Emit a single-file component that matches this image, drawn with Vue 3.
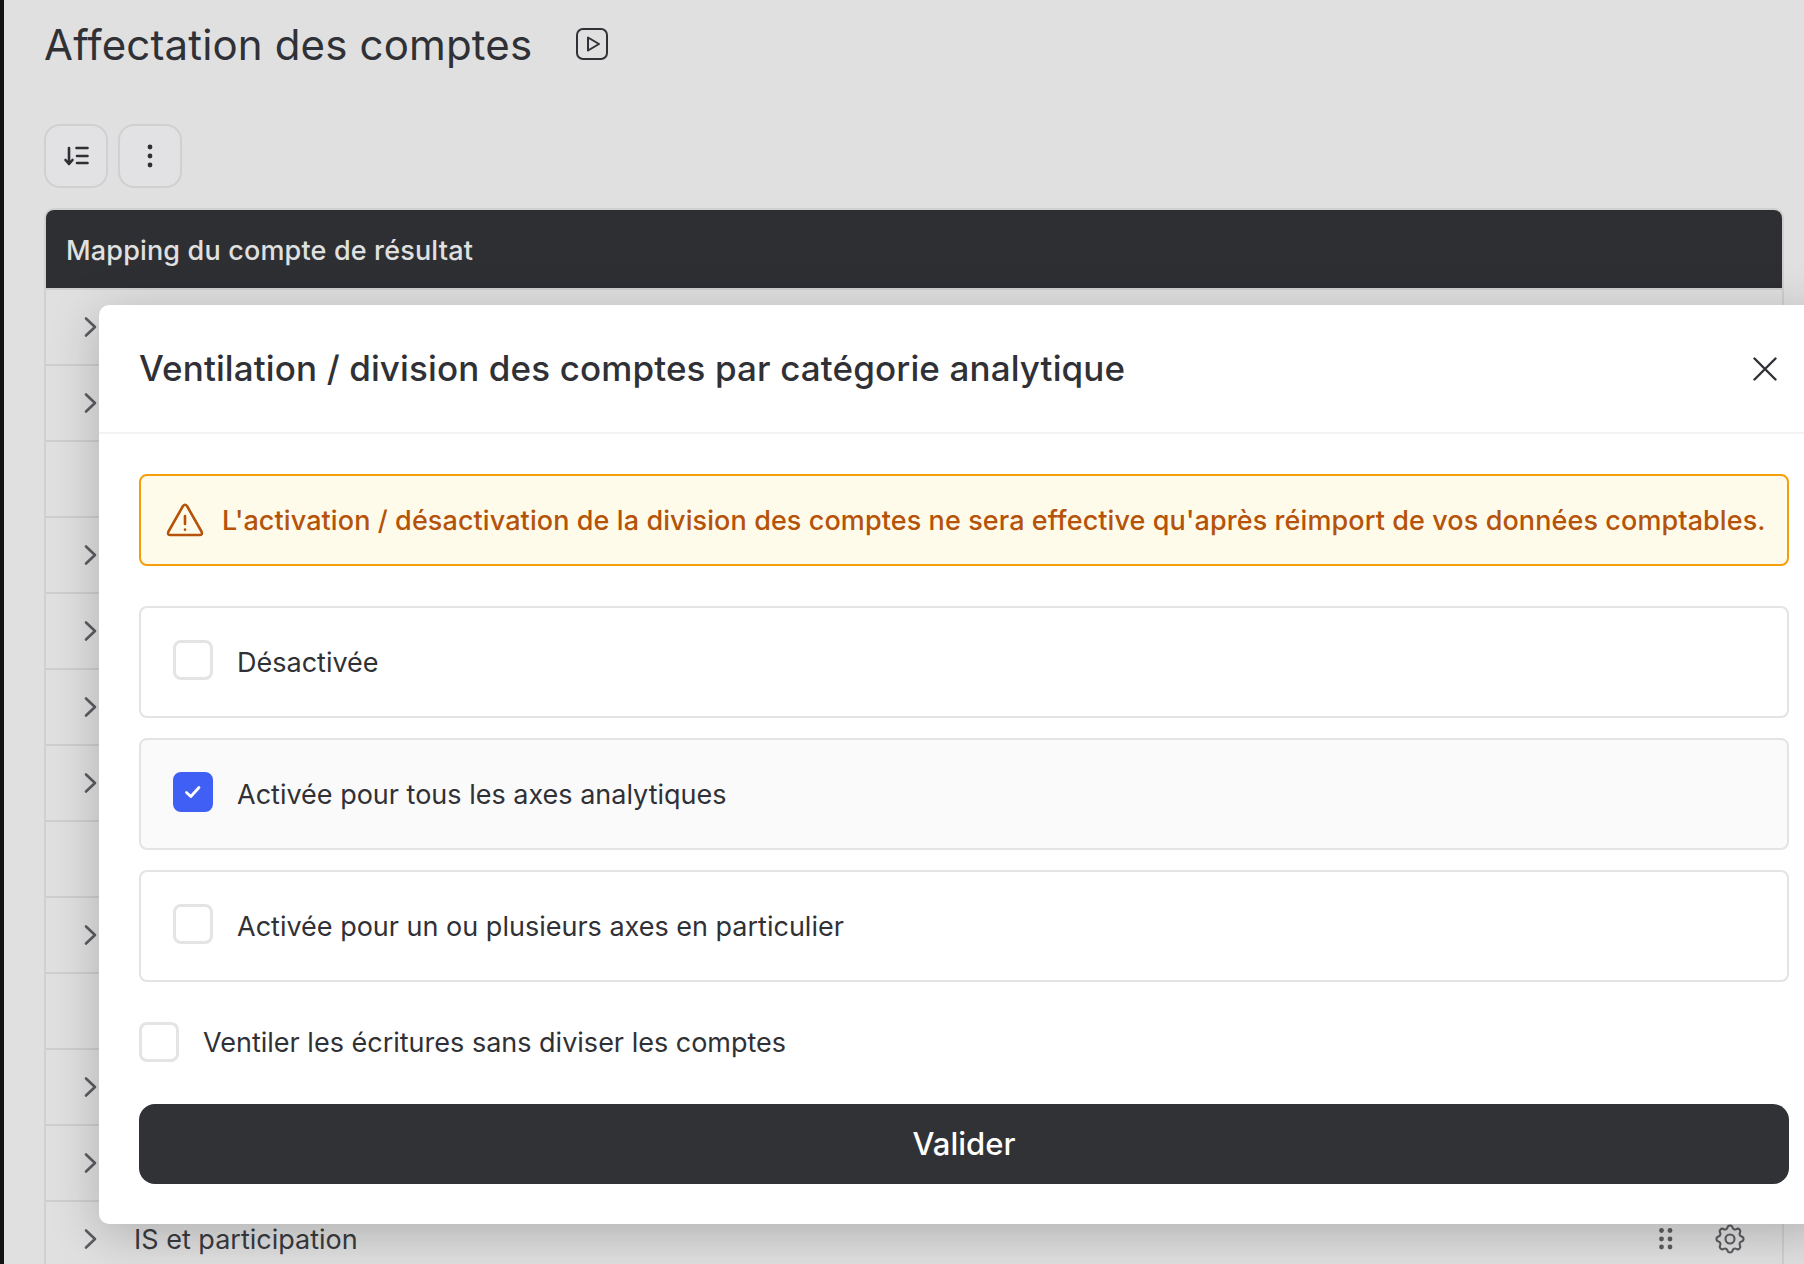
<template>
  <div class="page">
    <div class="edge"></div>
    <main class="content">
      <div class="head">
        <h1>Affectation des comptes</h1>
        <svg class="play" width="32" height="32" viewBox="0 0 32 32" fill="none" stroke="#303136" stroke-width="2" stroke-linejoin="round">
          <rect x="1" y="1" width="30" height="30" rx="6" />
          <path d="M12 9.500 23 16 12 22.500Z" />
        </svg>
      </div>
      <div class="tools">
        <button class="tool">
          <svg width="28" height="28" viewBox="0 0 28 28" fill="none" stroke="#2e2f33" stroke-width="2.600" stroke-linecap="round" stroke-linejoin="round">
            <path d="M7 6v16M3.500 18 7 22l3.500-4" />
            <path d="M14.500 6H25.500M15 14H25.500M15 21H25.500" />
          </svg>
        </button>
        <button class="tool">
          <svg width="28" height="28" viewBox="0 0 28 28" fill="#2e2f33">
            <circle cx="14" cy="5" r="2.400" />
            <circle cx="14" cy="14" r="2.400" />
            <circle cx="14" cy="23" r="2.400" />
          </svg>
        </button>
      </div>
      <section class="table">
        <div class="table-head">Mapping du compte de résultat</div>
        <div v-for="row in rows" :key="row.id" class="row">
          <svg v-if="row.chevron" class="chevron" width="20" height="24" viewBox="0 0 20 24" fill="none" stroke="#5c5d61" stroke-width="2.600" stroke-linecap="round" stroke-linejoin="round">
            <path d="M6 3.500 15 12 6 20.500" />
          </svg>
          <span v-if="row.label" class="row-label">{{ row.label }}</span>
          <div v-if="row.actions" class="row-actions">
            <svg width="16" height="24" viewBox="0 0 16 24" fill="#5c5d61">
              <circle cx="3.500" cy="3.500" r="2.400" />
              <circle cx="12" cy="3.500" r="2.400" />
              <circle cx="3.500" cy="12" r="2.400" />
              <circle cx="12" cy="12" r="2.400" />
              <circle cx="3.500" cy="20" r="2.400" />
              <circle cx="12" cy="20" r="2.400" />
            </svg>
            <svg width="36" height="36" viewBox="0 0 24 24" fill="none" stroke="#5c5d61" stroke-width="1.400" stroke-linecap="round" stroke-linejoin="round">
              <path d="M10.325 4.317c.426-1.756 2.924-1.756 3.350 0a1.724 1.724 0 0 0 2.573 1.066c1.543-.94 3.310.826 2.370 2.370a1.724 1.724 0 0 0 1.065 2.572c1.756.426 1.756 2.924 0 3.350a1.724 1.724 0 0 0-1.066 2.573c.94 1.543-.826 3.310-2.370 2.370a1.724 1.724 0 0 0-2.572 1.065c-.426 1.756-2.924 1.756-3.350 0a1.724 1.724 0 0 0-2.573-1.066c-1.543.94-3.310-.826-2.370-2.370a1.724 1.724 0 0 0-1.065-2.572c-1.756-.426-1.756-2.924 0-3.350a1.724 1.724 0 0 0 1.066-2.573c-.94-1.543.826-3.310 2.370-2.370 1 .608 2.296.07 2.572-1.065z" />
              <circle cx="12" cy="12" r="3" />
            </svg>
          </div>
        </div>
      </section>
    </main>

    <div class="modal">
      <header class="modal-head">
        <h2>Ventilation / division des comptes par catégorie analytique</h2>
        <svg class="close" width="24" height="24" viewBox="0 0 24 24" fill="none" stroke="#303136" stroke-width="2.400" stroke-linecap="round">
          <path d="M1.500 1.500 22.500 22.500M22.500 1.500 1.500 22.500" />
        </svg>
      </header>
      <div class="modal-body">
        <div class="alert">
          <svg class="alert-icon" width="38" height="34" viewBox="0 0 38 34" fill="none" stroke="#b45309" stroke-width="2.600" stroke-linecap="round" stroke-linejoin="round">
            <path d="M17 3 2.500 28.500Q1 32 4.500 32H33.500Q37 32 35.500 28.500L21 3Q19 .5 17 3Z" />
            <path d="M19 13V21M19 26.500V26.700" />
          </svg>
          <span>L'activation / désactivation de la division des comptes ne sera effective qu'après réimport de vos données comptables.</span>
        </div>
        <div class="options">
          <label v-for="opt in options" :key="opt.id" class="option" :class="{ selected: opt.checked }">
            <span class="box" :class="{ checked: opt.checked }">
              <svg v-if="opt.checked" width="18" height="14" viewBox="0 0 18 14" fill="none" stroke="#fff" stroke-width="2.800" stroke-linecap="round" stroke-linejoin="round">
                <path d="M2.500 7.500 6.800 11.500 15 2.500" />
              </svg>
            </span>
            <span class="text">{{ opt.label }}</span>
          </label>
        </div>
        <label class="plain-check">
          <span class="box"></span>
          <span class="text">Ventiler les écritures sans diviser les comptes</span>
        </label>
        <button class="submit">Valider</button>
      </div>
    </div>
  </div>
</template>

<script setup>
const noChevron = [3, 8, 10]
const rows = Array.from({ length: 13 }, (_, i) => ({
  id: i + 1,
  chevron: !noChevron.includes(i + 1),
  label: i === 12 ? 'IS et participation' : '',
  actions: i === 12
}))

const options = [
  { id: 'off', label: 'Désactivée', checked: false },
  { id: 'all', label: 'Activée pour tous les axes analytiques', checked: true },
  { id: 'some', label: 'Activée pour un ou plusieurs axes en particulier', checked: false }
]
</script>

<style>
html, body { margin: 0; overflow: hidden; }
</style>

<style scoped>
.page { position: relative; display: flex; height: 100vh; overflow: hidden; background: #e0e0e0; color: #303136; font-family: Inter, "Liberation Sans", sans-serif; }
.edge { width: 4px; flex: none; background: #121214; }
.content { flex: 1; padding: 0 20px 0 40px; min-width: 0; }
.head { display: flex; align-items: center; gap: 44px; height: 88px; }
.head h1 { margin: 0; font-size: 42px; font-weight: 400; letter-spacing: 0.15px; color: #303136; }
.tools { display: flex; gap: 10px; margin-top: 36px; }
.tool { display: flex; align-items: center; justify-content: center; width: 64px; height: 64px; padding: 0; background: #e2e2e4; border: 2px solid #d0d0d0; border-radius: 16px; }
.table { margin-top: 20px; border: 2px solid #d0d0d0; border-radius: 10px; }
.table-head { box-sizing: border-box; height: 78px; display: flex; align-items: center; padding: 3px 0 0 20px; background: #2e2f33; color: #e0e0e0; font-size: 27px; font-weight: 500; letter-spacing: 0.16px; border-radius: 8px 8px 0 0; }
.row { display: flex; align-items: center; box-sizing: border-box; height: 76px; padding: 0 34px 0 34px; border-top: 2px solid #cfcfcf; font-size: 27px; color: #3a3b3f; }
.chevron { flex: none; }
.row-label { margin-left: 34px; }
.row-actions { display: flex; align-items: center; gap: 38px; margin-left: auto; }
.modal { position: absolute; top: 305px; left: 99px; width: 1730px; background: #fff; border-radius: 10px; box-shadow: 0 10px 50px rgba(0, 0, 0, 0.22); }
.modal-head { display: flex; align-items: center; justify-content: space-between; box-sizing: border-box; height: 129px; padding: 0 52px 2px 40px; border-bottom: 2px solid #f3f3f4; }
.modal-head h2 { margin: 0; font-size: 35px; font-weight: 500; letter-spacing: 0.12px; color: #303136; }
.close { margin-top: 2px; }
.modal-body { padding: 40px; }
.alert { display: flex; align-items: center; gap: 18px; box-sizing: border-box; height: 92px; padding: 0 25px; background: #fffbeb; border: 2px solid #f59e0b; border-radius: 8px; color: #b45309; font-size: 27px; font-weight: 500; letter-spacing: 0.09px; white-space: nowrap; }
.alert-icon { flex: none; }
.options { display: flex; flex-direction: column; gap: 20px; margin-top: 40px; }
.option { display: flex; align-items: center; gap: 24px; box-sizing: border-box; height: 112px; padding-left: 32px; border: 2px solid #e4e4e7; border-radius: 8px; font-size: 27px; color: #303136; }
.option.selected { background: #fafafa; }
.option .box { margin-top: -5px; }
.text { margin-top: 1px; }
.box { display: flex; align-items: center; justify-content: center; flex: none; box-sizing: border-box; width: 40px; height: 40px; background: #fff; border: 3px solid #e4e4e7; border-radius: 8px; }
.box.checked { background: #3f5ff5; border-color: #3f5ff5; }
.plain-check { display: flex; align-items: center; gap: 24px; margin-top: 40px; font-size: 27px; color: #303136; }
.submit { display: block; width: 100%; height: 80px; margin-top: 42px; padding-bottom: 3px; background: #313236; border: 0; border-radius: 16px; color: #fff; font-family: inherit; font-size: 31px; font-weight: 500; }
</style>
